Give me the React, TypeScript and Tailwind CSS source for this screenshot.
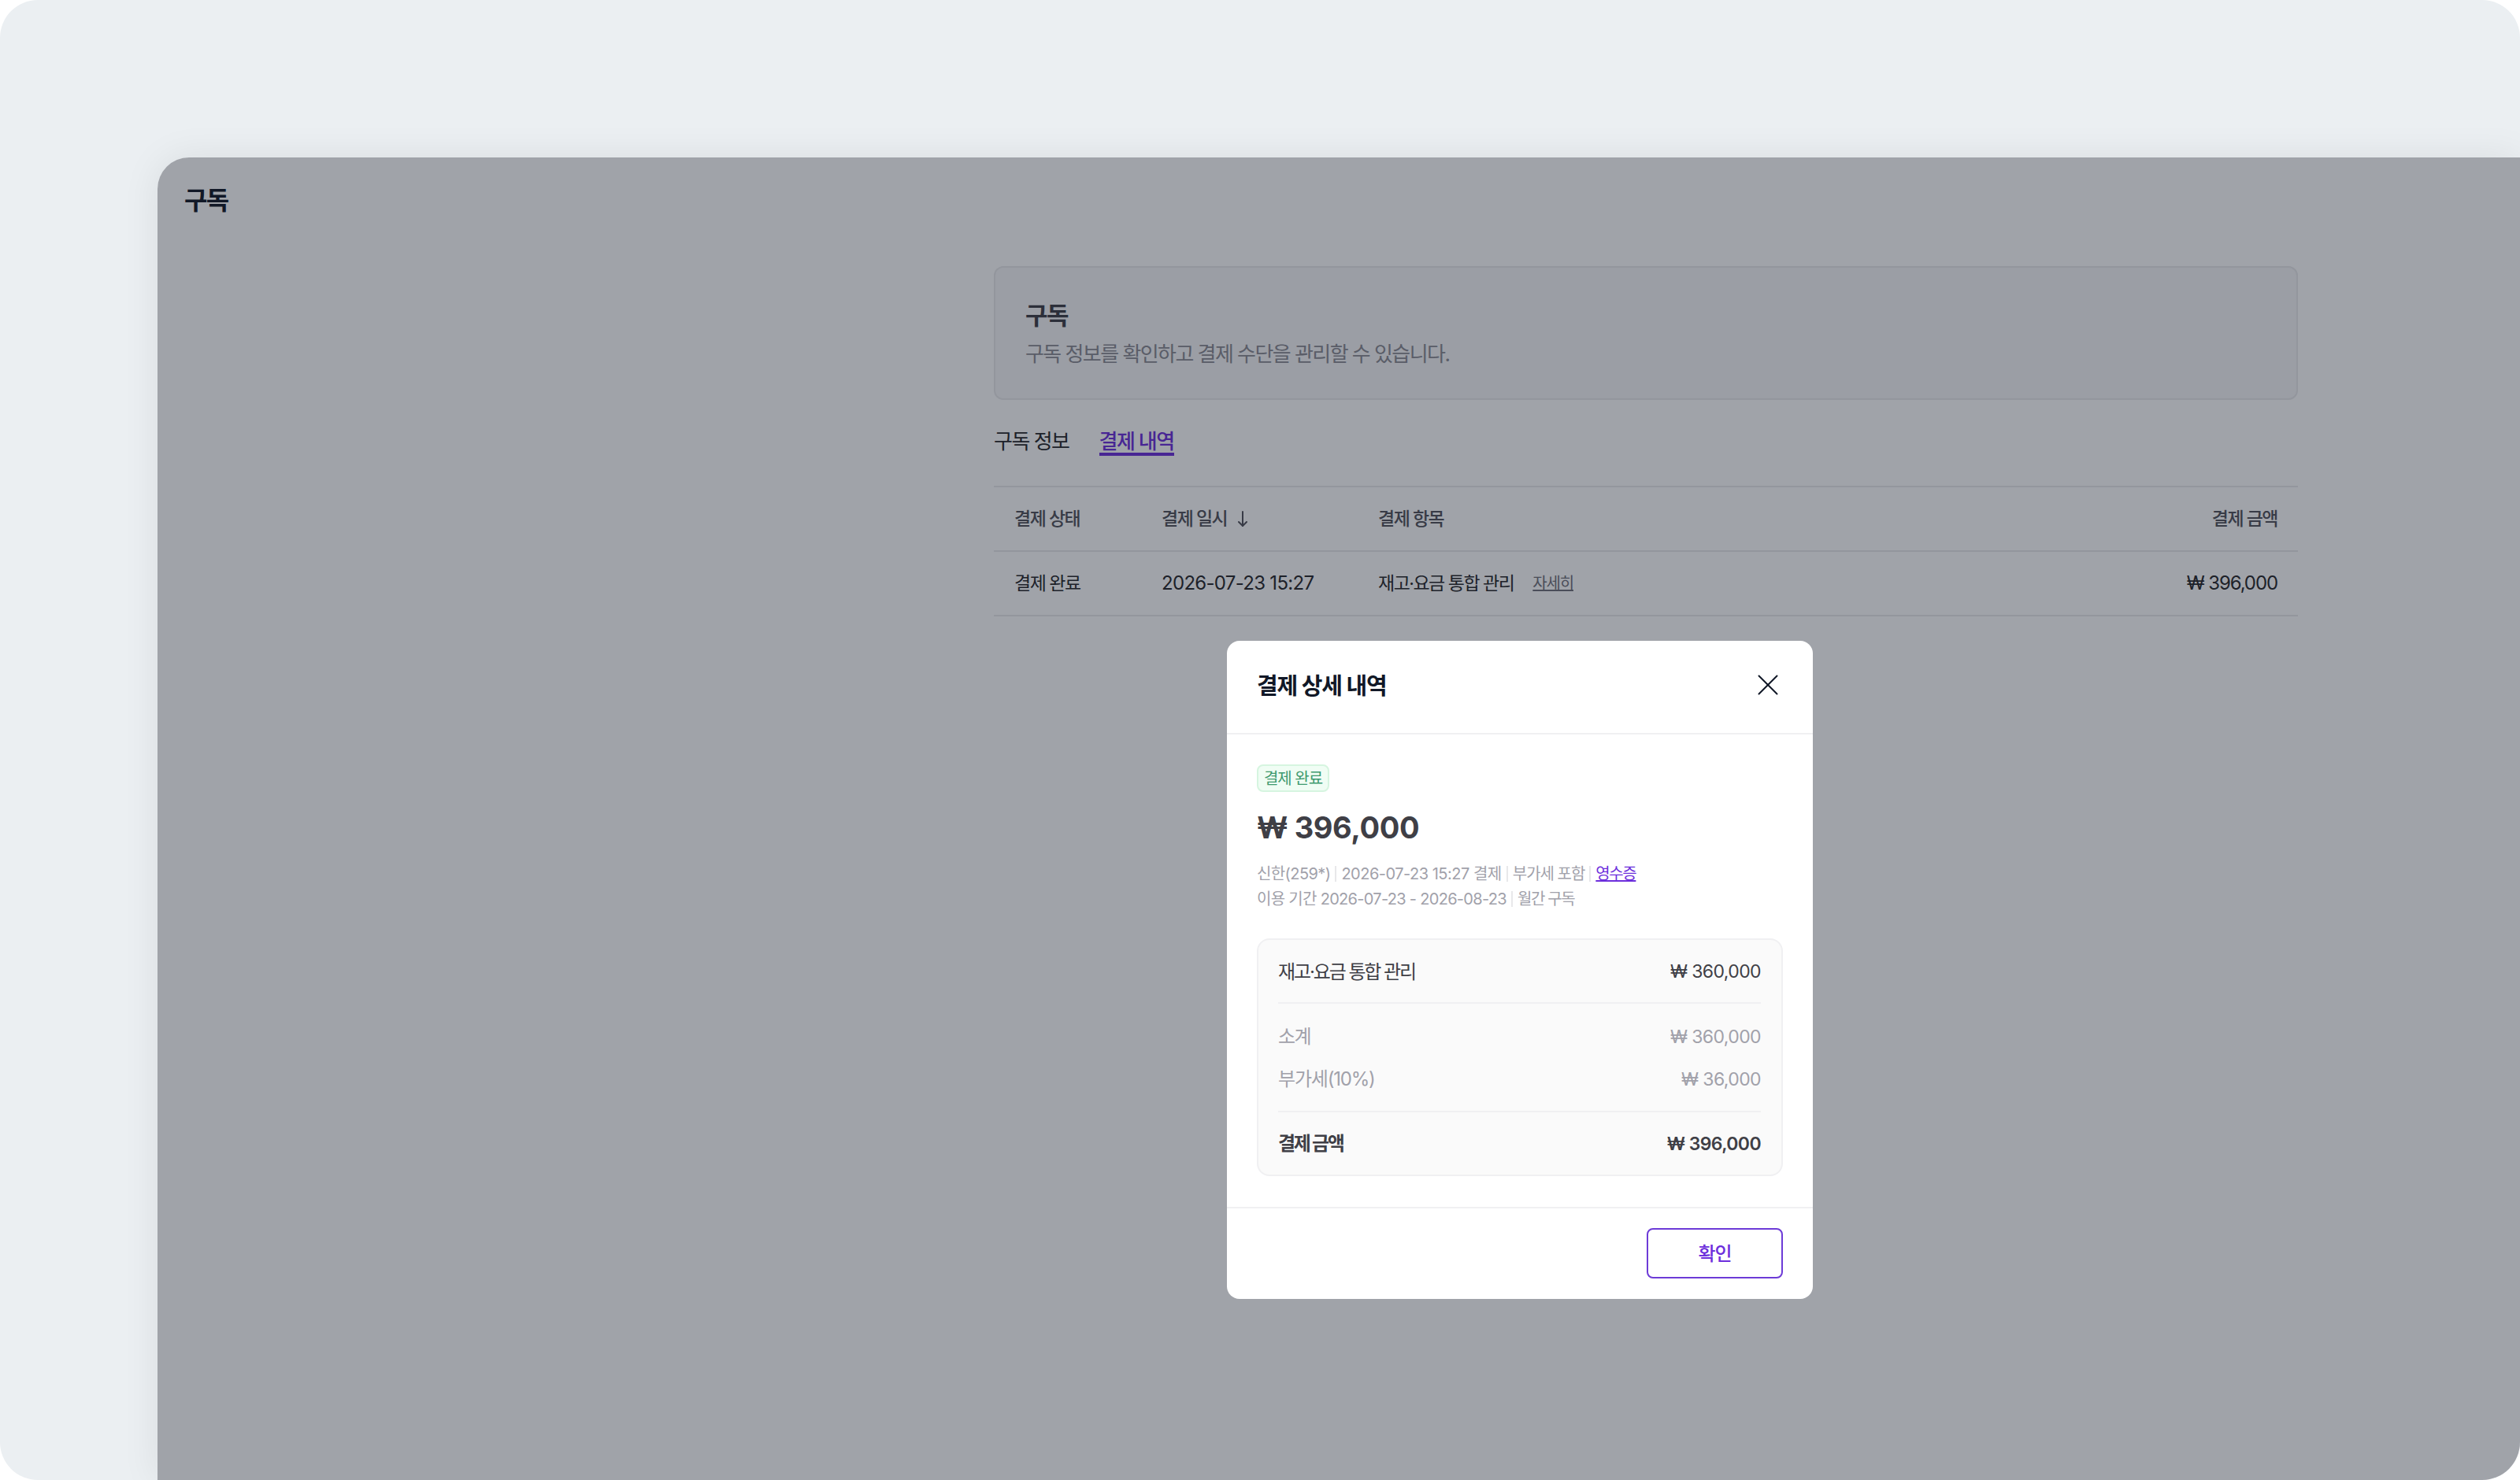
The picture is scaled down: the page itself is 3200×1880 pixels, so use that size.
import { X } from 'lucide-react';

const font = 'font-["Inter","Noto_Sans_CJK_KR",sans-serif]';

function Divider() {
  return <span className="mx-[6px] inline-block h-[20px] w-[2px] bg-[#e8e8ea]" />;
}

function TotalRow({ label, value, labelClass, className }: { label: string; value: string; labelClass: string; className: string }) {
  return (
    <div className={`flex items-center justify-between ${className}`}>
      <span className={labelClass}>{label}</span>
      <span className="text-[23px] tracking-[-0.6px]">{value}</span>
    </div>
  );
}

export default function App() {
  return (
    <div className={`h-[1880px] w-[3200px] overflow-hidden bg-white ${font}`}>
      <div className="flex h-full w-full overflow-hidden rounded-[48px] bg-[#ebeff2] pl-[200px] pt-[200px]">
        {/* page */}
        <div className="relative flex-1 rounded-tl-[40px] bg-white shadow-[0_0_48px_rgba(0,0,0,0.08)]">
          <div className="h-[138px] pl-[34px] pt-[35px]">
            <h1 className="text-[32px] leading-[40px] font-semibold tracking-[-1.6px] text-[#111827]">구독</h1>
          </div>

          <div className="ml-[1062px] w-[1656px]">
            <div className="h-[170px] rounded-[12px] border-2 border-[#e9e9ec] bg-[#f7f7f8] pl-[38px] pt-[42px]">
              <h2 className="text-[31px] leading-[38px] font-semibold tracking-[-1.4px] text-[#3f3f46]">구독</h2>
              <p className="mt-[12px] text-[26px] leading-[36px] tracking-[-1.55px] text-[#8b8b93]">구독 정보를 확인하고 결제 수단을 관리할 수 있습니다.</p>
            </div>

            <div className="mt-[35px] flex h-[74px] items-start gap-[38px] text-[26px] leading-[29px] tracking-[-1.5px]">
              <button className="pt-[3px] text-[#27272a]">구독 정보</button>
              <button className="border-b-4 border-[#6d2fdc] pt-[3px] font-medium text-[#6d2fdc]">결제 내역</button>
            </div>

            <div className="flex h-[82px] items-center border-t-2 border-[#e9e9ec] pl-[26px] pr-[26px] text-[23px] font-medium tracking-[-1.5px] text-[#52525b]">
              <div className="w-[187px] shrink-0">결제 상태</div>
              <div className="flex w-[275px] shrink-0 items-center gap-[14px]">
                결제 일시
                <svg width="12" height="21" viewBox="0 0 12 21" fill="none" stroke="currentColor" strokeWidth="2" strokeLinecap="round" strokeLinejoin="round">
                  <path d="M6 1v18" />
                  <path d="M1 14l5 5 5-5" />
                </svg>
              </div>
              <div className="flex-1">결제 항목</div>
              <div>결제 금액</div>
            </div>
            <div className="flex h-[84px] items-center border-y-2 border-[#e9e9ec] pl-[26px] pr-[26px] text-[24px] text-[#27272a]">
              <div className="w-[187px] shrink-0 text-[23px] tracking-[-1.5px]">결제 완료</div>
              <div className="w-[275px] shrink-0 tracking-[-0.7px]">2026-07-23 15:27</div>
              <div className="flex flex-1 items-center gap-[24px]">
                <span className="text-[23px] tracking-[-1.5px]">재고·요금 통합 관리</span>
                <a className="text-[20px] tracking-[-1.2px] text-[#71717a] underline">자세히</a>
              </div>
              <div className="tracking-[-1.1px]">₩ 396,000</div>
            </div>
          </div>

          {/* dim layer */}
          <div className="absolute inset-0 rounded-tl-[40px] bg-[#111827]/40" />

          {/* modal */}
          <div className="absolute left-[1358px] top-[614px] flex h-[836px] w-[744px] flex-col rounded-[16px] bg-white">
            <div className="flex h-[119px] shrink-0 items-center justify-between border-b-2 border-[#f0f0f2] pb-[2px] pl-[38px] pr-[46px]">
              <h3 className="text-[29px] font-semibold tracking-[-1.3px] text-[#111827]">결제 상세 내역</h3>
              <X size={46} strokeWidth={1.05} className="-mr-[11.5px] -mt-[3px] text-[#111827]" />
            </div>

            <div className="flex-1 px-[38px] pt-[38px]">
              <span className="flex h-[35px] w-[92px] items-center justify-center rounded-[8px] border-2 border-[#d6f5e0] bg-[#f0fdf4] text-[20px] tracking-[-1px] text-[#3f9a6f]">결제 완료</span>
              <div className="mt-[20px] text-[38px] leading-[50px] font-bold tracking-[-0.4px] text-[#3f3f46]">₩ 396,000</div>
              <div className="mt-[18px] flex h-[32px] items-center text-[20px] text-[#a1a1aa]">
                <span className="tracking-[-0.6px]">신한(259*)</span><Divider />
                <span className="tracking-[-0.5px]">2026-07-23 15:27 결제</span><Divider />
                <span className="tracking-[-1px]">부가세 포함</span><Divider />
                <a className="tracking-[-1.4px] text-[#6d2fdc] underline">영수증</a>
              </div>
              <div className="flex h-[32px] items-center text-[20px] text-[#a1a1aa]">
                <span className="tracking-[-0.7px]">이용 기간 2026-07-23 - 2026-08-23</span><Divider />
                <span className="tracking-[-1.4px]">월간 구독</span>
              </div>

              <div className="mt-[34px] h-[302px] rounded-[16px] border-2 border-[#f0f0f2] bg-[#fafafa] pl-[25px] pr-[26px]">
                <TotalRow label="재고·요금 통합 관리" value="₩ 360,000" labelClass="tracking-[-2.1px]" className="h-[81px] border-b-2 border-[#f0f0f2] pt-[2px] text-[24px] text-[#3f3f46]" />
                <TotalRow label="소계" value="₩ 360,000" labelClass="tracking-[-1.6px]" className="mt-[15px] h-[54px] text-[24px] text-[#a1a1aa]" />
                <TotalRow label="부가세(10%)" value="₩ 36,000" labelClass="tracking-[-1.2px]" className="h-[54px] text-[24px] text-[#a1a1aa]" />
                <div className="mt-[13px] border-t-2 border-[#f0f0f2]" />
                <TotalRow label="결제 금액" value="₩ 396,000" labelClass="tracking-[-2.4px]" className="h-[80px] text-[24px] font-semibold text-[#3f3f46]" />
              </div>
            </div>

            <div className="flex h-[117px] shrink-0 items-start justify-end border-t-2 border-[#f0f0f2] pr-[38px] pt-[25px]">
              <button className="h-[64px] w-[173px] rounded-[8px] border-2 border-[#6d3bd7] pt-[2px] text-[24px] font-medium tracking-[-1px] text-[#6d2fdc]">확인</button>
            </div>
          </div>
        </div>
      </div>
    </div>
  );
}
